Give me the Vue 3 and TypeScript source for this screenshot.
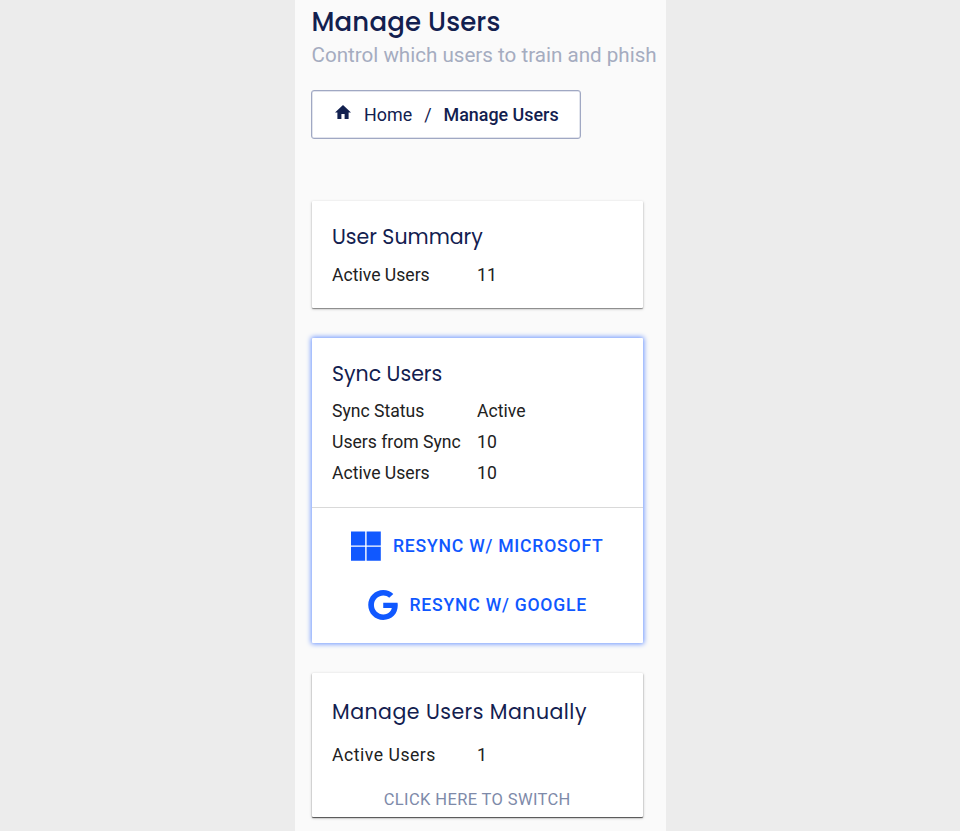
<script setup lang="ts">
interface Stat {
  label: string
  value: string
}

const summary: Stat[] = [{ label: 'Active Users', value: '11' }]
const sync: Stat[] = [
  { label: 'Sync Status', value: 'Active' },
  { label: 'Users from Sync', value: '10' },
  { label: 'Active Users', value: '10' },
]
const manual: Stat[] = [{ label: 'Active Users', value: '1' }]
</script>

<template>
  <div class="page">
    <main class="panel">
      <h1 class="title">Manage Users</h1>
      <p class="subtitle">Control which users to train and phish</p>

      <nav class="crumbs">
        <svg class="home" viewBox="2 3 20 17" preserveAspectRatio="none"><path d="M10 20v-6h4v6h5v-8h3L12 3 2 12h3v8z" /></svg>
        <a class="crumb">Home</a>
        <span class="slash">/</span>
        <span class="current">Manage Users</span>
      </nav>

      <section class="card summary">
        <h2 class="heading">User Summary</h2>
        <dl class="stats">
          <template v-for="s in summary" :key="s.label">
            <dt>{{ s.label }}</dt>
            <dd>{{ s.value }}</dd>
          </template>
        </dl>
      </section>

      <section class="card sync">
        <div class="sync-info">
          <h2 class="heading">Sync Users</h2>
          <dl class="stats">
            <template v-for="s in sync" :key="s.label">
              <dt>{{ s.label }}</dt>
              <dd>{{ s.value }}</dd>
            </template>
          </dl>
        </div>
        <div class="actions">
          <button class="action microsoft">
            <svg class="icon" viewBox="0 0 30 30"><path d="M0 .5h14.2v13.9H0zM15.600 .5h14.200v13.900H15.600zM0 15.800h14.200v14H0zM15.600 15.800h14.200v14H15.600z" /></svg>
            <span>RESYNC W/ MICROSOFT</span>
          </button>
          <button class="action google">
            <svg class="icon" viewBox="0 0 488 496"><path d="M488 261.8C488 403.3 391.1 504 248 504 110.800 504 0 393.200 0 256S110.800 8 248 8c66.800 0 123 24.500 166.300 64.900l-67.500 64.900C258.500 52.600 94.300 116.600 94.300 256c0 86.500 69.100 156.600 153.700 156.600 98.200 0 135-70.400 140.800-106.900H248v-85.300h236.100c2.300 12.700 3.900 24.900 3.900 41.400z" transform="translate(0 -8)" /></svg>
            <span>RESYNC W/ GOOGLE</span>
          </button>
        </div>
      </section>

      <section class="card manual">
        <h2 class="heading">Manage Users Manually</h2>
        <dl class="stats">
          <template v-for="s in manual" :key="s.label">
            <dt>{{ s.label }}</dt>
            <dd>{{ s.value }}</dd>
          </template>
        </dl>
        <button class="switch">CLICK HERE TO SWITCH</button>
      </section>
    </main>
  </div>
</template>

<style>
body {
  background: #ececec;
}
</style>

<style scoped>
.page {
  height: 831px;
  overflow: hidden;
  display: flex;
  background: #ececec;
  font-family: Roboto, "Liberation Sans", sans-serif;
  color: #212121;
}
.panel {
  box-sizing: border-box;
  width: 371px;
  height: 831px;
  margin-left: 295px;
  padding: 4px 0 0 16.5px;
  background: #fafafa;
  white-space: nowrap;
}
.title,
.heading {
  margin: 0;
  font-family: Poppins, Inter, sans-serif;
  color: #12204f;
}
.title {
  font-size: 26px;
  line-height: 36px;
  font-weight: 500;
  letter-spacing: 0.15px;
}
.subtitle {
  margin: 0;
  font-size: 20.6px;
  line-height: 30px;
  color: #a5acc0;
}
.crumbs {
  box-sizing: border-box;
  width: 270px;
  height: 49px;
  margin: 20px 0 0 -0.5px;
  padding-left: 23px;
  display: flex;
  align-items: center;
  border: 1px solid #a0a8c3;
  border-radius: 3px;
  background: #fff;
  box-shadow: inset 0 0 0 0.5px #c5cadb;
  font-size: 17.9px;
  color: #12204f;
}
.home {
  width: 16px;
  height: 14px;
  margin: -5px 13px 0 0;
  fill: #12204f;
}
.slash {
  margin: 0 12px;
}
.current {
  font-weight: 500;
}
.card {
  box-sizing: border-box;
  width: 331.5px;
  border-radius: 1px;
  background: #fff;
  box-shadow: 0 1px 3px rgba(0, 0, 0, 0.25), 0 1px 1px rgba(0, 0, 0, 0.35);
}
.summary {
  height: 107px;
  margin-top: 62px;
  padding: 20px 20.5px 0;
}
.summary .stats {
  margin-top: 8px;
}
.sync {
  height: 305px;
  margin-top: 30px;
  box-shadow: 0 0 5px 1px #6c95ff;
}
.sync-info {
  box-sizing: border-box;
  height: 170px;
  padding: 20px 20.5px 0;
  border-bottom: 1px solid #d9d9d9;
}
.manual {
  height: 144px;
  margin-top: 30px;
  padding: 23px 20.5px 0;
  box-shadow: 0 1px 3px rgba(0, 0, 0, 0.3), 0 1px 1px rgba(0, 0, 0, 0.6);
}
.heading {
  font-size: 20.5px;
  line-height: 31px;
  font-weight: 400;
}
.manual .heading {
  letter-spacing: 0.48px;
}
.stats {
  margin: 7px 0 0;
  display: grid;
  grid-template-columns: 145px 1fr;
  font-size: 17.6px;
  line-height: 31px;
}
.stats dd {
  margin: 0;
}
.manual .stats {
  margin-top: 13px;
}
.manual .stats dt {
  letter-spacing: 0.52px;
}
button {
  padding: 0;
  border: 0;
  background: none;
  font-family: inherit;
}
.actions {
  padding-top: 23px;
  display: flex;
  flex-direction: column;
  align-items: center;
  gap: 29px;
}
.action {
  height: 30px;
  display: flex;
  align-items: center;
  gap: 12px;
  font-size: 17.6px;
  line-height: 20px;
  font-weight: 500;
  letter-spacing: 0.77px;
  color: #1058ff;
}
.action span {
  margin-bottom: 1px;
}
.icon {
  width: 30px;
  height: 30px;
  fill: #1058ff;
}
.switch {
  display: block;
  margin: 17px auto 0;
  font-size: 16.5px;
  line-height: 24px;
  letter-spacing: 0.37px;
  color: #7e8aa9;
}
</style>
